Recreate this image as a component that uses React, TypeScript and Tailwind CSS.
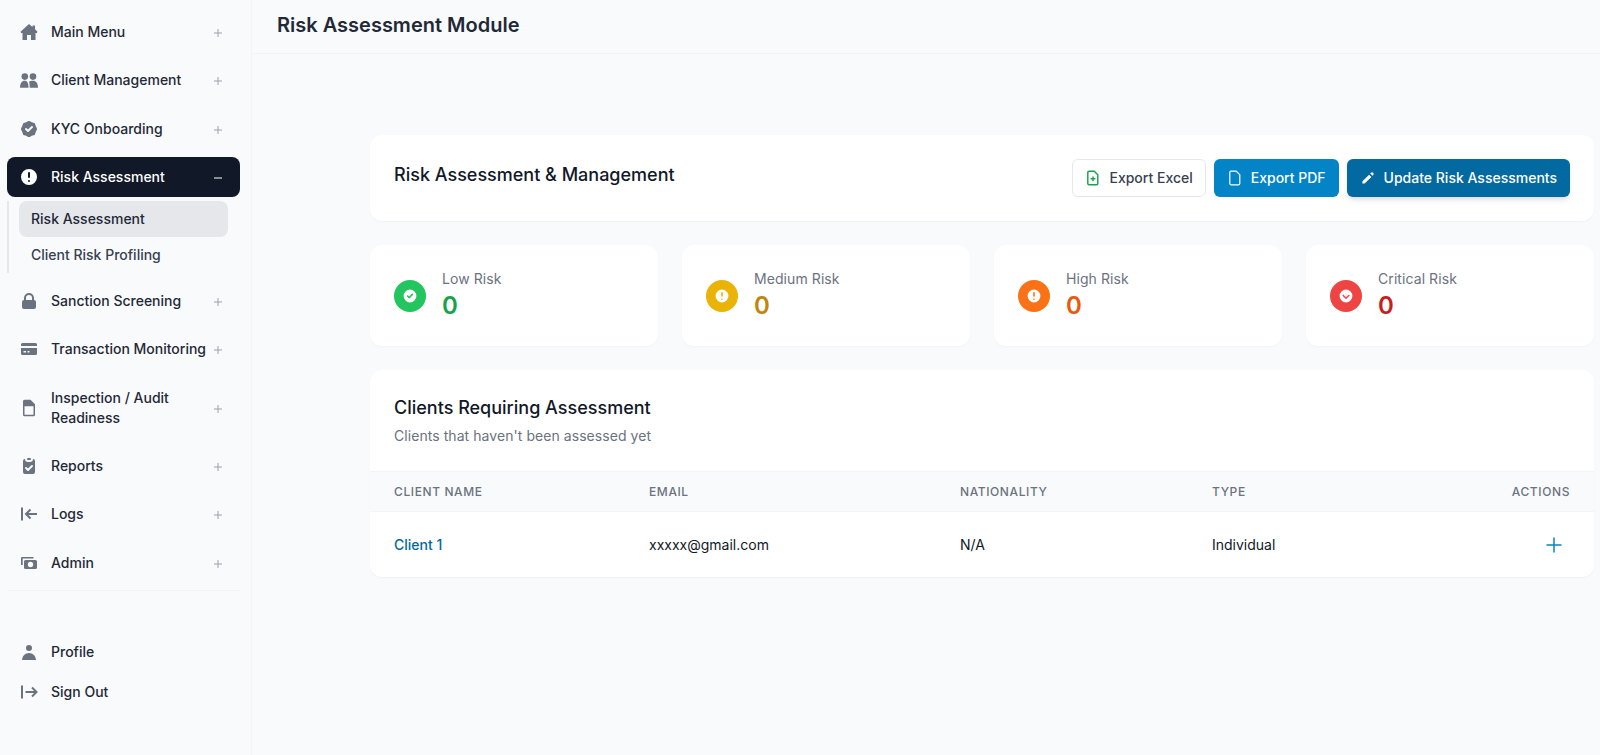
import React from "react";
import { HiBadgeCheck, HiExclamationCircle, HiClipboardCheck, HiPencil, HiCheckCircle, HiLockClosed, HiUser } from "react-icons/hi";

type IC = { className?: string };
const HomeIcon = ({ className }: IC) => (
  <svg viewBox="0 0 20 20" fill="currentColor" className={className}>
    <path d="M10 2 13.500 5V3.500H16V7.300L18.500 9.800 17.800 11H16.500V18H12V13H8V18H3.500V11H2.200L1.500 9.800Z" />
  </svg>
);
const PeopleIcon = ({ className }: IC) => (
  <svg viewBox="0 0 20 20" fill="currentColor" className={className}>
    <circle cx="5.800" cy="6.600" r="3.300" />
    <circle cx="14" cy="6.600" r="3.300" />
    <path d="M1 17.800C1 13 3 10.800 5.500 10.800 8 10.800 9.500 12.500 9.500 17.800Z" />
    <path d="M10.700 17.800C10.700 15 10.500 12.500 10 11.700 11 11 12.500 10.800 14 10.800 17 10.800 19 13 19 17.800Z" />
  </svg>
);
const CardIcon = ({ className }: IC) => (
  <svg viewBox="0 0 20 20" fill="currentColor" className={className}>
    <path fillRule="evenodd" d="M3.500 4h13A1.500 1.500 0 0 1 18 5.500V7H2V5.500A1.500 1.500 0 0 1 3.500 4ZM2 9h16v5.500a1.500 1.500 0 0 1-1.500 1.500h-13A1.500 1.500 0 0 1 2 14.500V9Zm2.500 3v1.500h2.500V12H4.500Zm4 0v1.500h2V12h-2Z" />
  </svg>
);
const DocIcon = ({ className }: IC) => (
  <svg viewBox="0 0 20 20" fill="currentColor" className={className}>
    <path fillRule="evenodd" d="M5.500 1.800h6L16 6.300v10.400a1.500 1.500 0 0 1-1.500 1.500h-9A1.500 1.500 0 0 1 4 16.700V3.300a1.500 1.500 0 0 1 1.500-1.500Zm0 6.400v8.500h9V8.200h-9Z" />
  </svg>
);
const ArrowIn = ({ className }: IC) => (
  <svg viewBox="0 0 20 20" fill="none" stroke="currentColor" strokeWidth="2" className={className}>
    <path d="M3 3.500v13M18 10H7M11.500 5.500 7 10l4.500 4.500" />
  </svg>
);
const ArrowOut = ({ className }: IC) => (
  <svg viewBox="0 0 20 20" fill="none" stroke="currentColor" strokeWidth="2" className={className}>
    <path d="M3 3.500v13M6.500 10H17M13 5.500l4.500 4.500-4.500 4.500" />
  </svg>
);
const AdminIcon = ({ className }: IC) => (
  <svg viewBox="0 0 20 20" fill="currentColor" className={className}>
    <path fillRule="evenodd" d="M3 4h11.500v1.600H3.700V12H2V5a1 1 0 0 1 1-1ZM6.500 7h10A1.500 1.500 0 0 1 18 8.500v6a1.500 1.500 0 0 1-1.500 1.500h-10A1.500 1.500 0 0 1 5 14.500v-6A1.500 1.500 0 0 1 6.500 7Zm5 1.800a2.700 2.700 0 1 0 0 5.400 2.700 2.700 0 0 0 0-5.400Z" />
  </svg>
);

function Item({ icon: I, label, active, tall }: { icon: React.ComponentType<IC>; label: React.ReactNode; active?: boolean; tall?: boolean }) {
  return (
    <div className={`flex items-center rounded-lg pl-3 pr-[18px] ${tall ? "h-[60px]" : "h-10"} ${active ? "bg-[#111827] text-white" : "text-[#1f2937]"}`}>
      <I className={`h-5 w-5 shrink-0 ${active ? "text-white" : "text-[#6b7280]"}`} />
      <span className="ml-3 min-w-0 flex-1 leading-5">{label}</span>
      <svg viewBox="0 0 10 10" className={`mt-[2px] h-2 w-2 shrink-0 ${active ? "text-white" : "text-gray-400"}`} fill="none" stroke="currentColor" strokeWidth="1.250">
        {active ? <path d="M0 5h10" /> : <path d="M5 0v10M0 5h10" />}
      </svg>
    </div>
  );
}

function Stat({ bg, color, label, icon: I }: { bg: string; color: string; label: string; icon: React.ComponentType<IC> }) {
  return (
    <div className="flex h-[101px] items-center rounded-xl bg-white px-6 shadow-[0_1px_2px_rgba(0,0,0,0.03)]">
      <div className={`flex h-8 w-8 items-center justify-center rounded-full ${bg}`}>
        <I className="h-4 w-4 text-white" />
      </div>
      <div className="ml-4">
        <div className="text-[14px] font-normal leading-5 tracking-[0.08px] text-[#6b7280]">{label}</div>
        <div className={`mt-px text-[24px] font-semibold leading-8 ${color}`}>0</div>
      </div>
    </div>
  );
}

const CircleDown = ({ className }: IC) => (
  <svg viewBox="0 0 20 20" fill="currentColor" className={className}>
    <path fillRule="evenodd" d="M10 18a8 8 0 1 0 0-16 8 8 0 0 0 0 16ZM6.500 8.200 10 11.700l3.500-3.500 1.200 1.200L10 14.100 5.300 9.400l1.200-1.200Z" />
  </svg>
);

export default function App() {
  return (
    <div className="flex h-[755px] overflow-hidden bg-[#f9fafb] text-[14px] font-medium text-[#1f2937] [font-family:Inter,sans-serif]">
      <aside className="flex w-[252px] shrink-0 flex-col border-r border-[#f3f4f6] pl-[7px] pr-[11px] pt-3">
        <div className="flex flex-col gap-[8.300px]">
          <Item icon={HomeIcon} label="Main Menu" />
          <Item icon={PeopleIcon} label="Client Management" />
          <Item icon={HiBadgeCheck} label="KYC Onboarding" />
          <div>
            <Item icon={HiExclamationCircle} label="Risk Assessment" active />
            <div className="mt-1 border-l-2 border-[#e5e7eb] pl-[10px] pr-3">
              <div className="flex h-9 items-center rounded-lg bg-[#e5e7eb] px-3 text-[#1f2937]">Risk Assessment</div>
              <div className="flex h-9 items-center px-3 text-[#374151]">Client Risk Profiling</div>
            </div>
          </div>
          <Item icon={HiLockClosed} label="Sanction Screening" />
          <Item icon={CardIcon} label="Transaction Monitoring" />
          <Item icon={DocIcon} label="Inspection / Audit Readiness" tall />
          <Item icon={HiClipboardCheck} label="Reports" />
          <Item icon={ArrowIn} label="Logs" />
          <Item icon={AdminIcon} label="Admin" />
        </div>
        <div className="mt-[7px] border-t border-[#f3f4f6]" />
        <div className="mt-[41px] flex flex-col">
          <div className="flex h-10 items-center pl-3"><HiUser className="h-5 w-5 text-[#6b7280]" /><span className="ml-3">Profile</span></div>
          <div className="flex h-10 items-center pl-3"><ArrowOut className="h-5 w-5 text-[#6b7280]" /><span className="ml-3">Sign Out</span></div>
        </div>
      </aside>
      <div className="flex min-w-0 flex-1 flex-col">
        <header className="flex h-[54px] shrink-0 items-center border-b border-[#f3f4f6] pb-[3px] pl-[25px]">
          <h1 className="text-[20px] font-semibold text-[#1f2937]">Risk Assessment Module</h1>
        </header>
        <main className="flex flex-col gap-6 pb-6 pl-[118px] pr-[6px] pt-[81px]">
          <section className="flex h-[86px] items-start justify-between rounded-xl bg-white p-6 shadow-[0_1px_2px_rgba(0,0,0,0.04)]">
            <h2 className="mt-[2px] text-[18px] font-medium leading-7 text-[#111827]">Risk Assessment &amp; Management</h2>
            <div className="flex gap-2">
              <button className="flex h-[38px] items-center gap-2 rounded-md border border-[#e5e7eb] bg-white px-3 pb-px text-[#374151]">
                <svg viewBox="0 0 20 20" className="h-4 w-4 text-[#16a34a]" fill="none" stroke="currentColor" strokeWidth="1.800"><path d="M5 1.500h6.500l4.500 4.500v11a1.500 1.500 0 0 1-1.500 1.500H5A1.500 1.500 0 0 1 3.500 17V3A1.500 1.500 0 0 1 5 1.500Z" /><path d="M10 8v6M7 11h6" /></svg>
                Export Excel
              </button>
              <button className="flex h-[38px] items-center gap-2 rounded-md bg-[#0284c7] px-[13px] pb-px text-white">
                <svg viewBox="0 0 20 20" className="h-4 w-4" fill="none" stroke="currentColor" strokeWidth="1.500"><path d="M5 1.500h6.500l4.500 4.500v11a1.500 1.500 0 0 1-1.500 1.500H5A1.500 1.500 0 0 1 3.500 17V3A1.500 1.500 0 0 1 5 1.500Z" /></svg>
                Export PDF
              </button>
              <button className="flex h-[38px] items-center gap-2 rounded-md bg-[#0369a1] px-[13px] pb-px text-white shadow-md">
                <HiPencil className="h-4 w-4" />
                Update Risk Assessments
              </button>
            </div>
          </section>
          <section className="grid grid-cols-4 gap-6">
            <Stat bg="bg-[#22c55e]" color="text-[#16a34a]" label="Low Risk" icon={HiCheckCircle} />
            <Stat bg="bg-[#eab308]" color="text-[#c2850c]" label="Medium Risk" icon={HiExclamationCircle} />
            <Stat bg="bg-[#f97316]" color="text-[#ea580c]" label="High Risk" icon={HiExclamationCircle} />
            <Stat bg="bg-[#ef4444]" color="text-[#c81e1e]" label="Critical Risk" icon={CircleDown} />
          </section>
          <section className="overflow-hidden rounded-xl bg-white font-normal shadow-[0_1px_2px_rgba(0,0,0,0.04)]">
            <div className="h-[101px] p-6">
              <h3 className="text-[18px] font-medium leading-7 text-[#111827]">Clients Requiring Assessment</h3>
              <p className="mt-1 text-[14px] leading-5 tracking-[0.06px] text-[#6b7280]">Clients that haven&apos;t been assessed yet</p>
            </div>
            <div className="grid h-[41px] grid-cols-[255px_311px_252px_1fr_auto] items-center border-y border-[#f3f4f6] bg-[#f9fafb] px-6 text-[12px] font-medium uppercase tracking-[0.05em] text-[#6b7280]">
              <span>Client Name</span><span>Email</span><span>Nationality</span><span>Type</span><span>Actions</span>
            </div>
            <div className="grid h-[65px] grid-cols-[255px_311px_252px_1fr_auto] items-center px-6 text-[14px] text-[#111827]">
              <span className="font-medium text-[#0369a1]">Client 1</span><span>xxxxx@gmail.com</span><span>N/A</span><span>Individual</span>
              <svg viewBox="0 0 20 20" className="mr-[6px] h-5 w-5 text-[#0284c7]" fill="none" stroke="currentColor" strokeWidth="1.500"><path d="M10 2.500v15M2.500 10h15" /></svg>
            </div>
          </section>
        </main>
      </div>
    </div>
  );
}
